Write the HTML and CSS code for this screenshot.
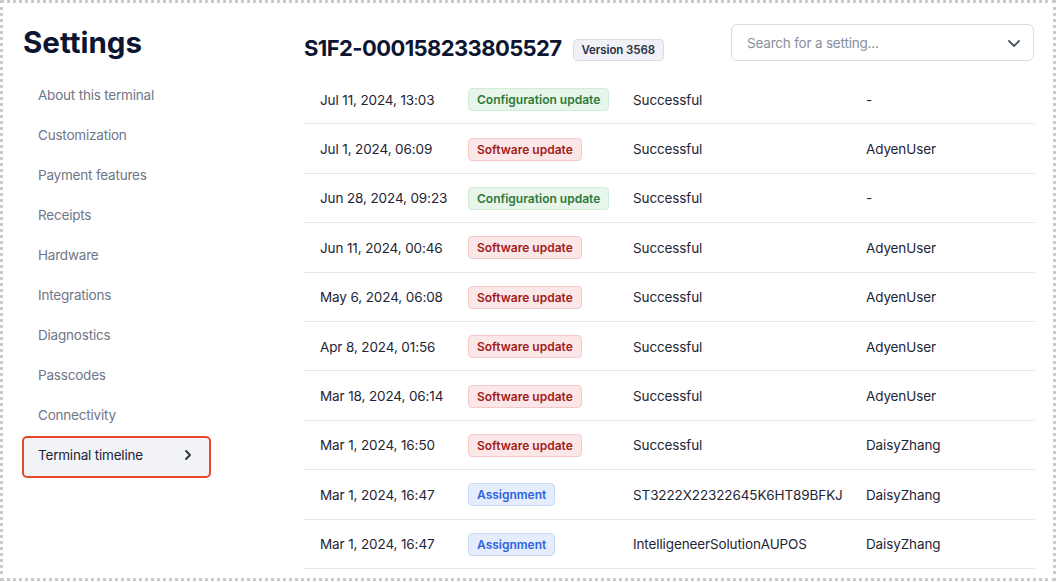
FILE: index.html
```html
<!DOCTYPE html>
<html lang="en">
<head>
<meta charset="utf-8">
<title>Settings</title>
<link rel="stylesheet" href="styles.css">
</head>
<body>
<div class="frame">
  <aside class="sidebar">
    <h1 class="sidebar-title">Settings</h1>
    <nav class="nav">
      <a class="nav-item">About this terminal</a>
      <a class="nav-item">Customization</a>
      <a class="nav-item">Payment features</a>
      <a class="nav-item">Receipts</a>
      <a class="nav-item">Hardware</a>
      <a class="nav-item">Integrations</a>
      <a class="nav-item">Diagnostics</a>
      <a class="nav-item">Passcodes</a>
      <a class="nav-item">Connectivity</a>
      <a class="nav-item nav-item-active">
        <span>Terminal timeline</span>
        <svg class="nav-chevron" width="10" height="12" viewBox="0 0 10 12"><path d="M3 2 L7 6 L3 10" fill="none" stroke="#2a3040" stroke-width="1.8" stroke-linecap="round" stroke-linejoin="round"/></svg>
      </a>
    </nav>
  </aside>
  <main class="main">
    <header class="header">
      <div class="title-group">
        <h2 class="terminal-id">S1F2-000158233805527</h2>
        <span class="version-badge">Version 3568</span>
      </div>
      <div class="search">
        <span class="search-placeholder">Search for a setting...</span>
        <svg class="search-chevron" width="14" height="10" viewBox="0 0 14 10"><path d="M2 3 L7 8 L12 3" fill="none" stroke="#4b5263" stroke-width="1.8" stroke-linecap="round" stroke-linejoin="round"/></svg>
      </div>
    </header>
    <div class="timeline">
      <div class="row"><span class="date">Jul 11, 2024, 13:03</span><span><span class="badge badge-config">Configuration update</span></span><span class="cell">Successful</span><span class="cell">-</span></div>
      <div class="row"><span class="date">Jul 1, 2024, 06:09</span><span><span class="badge badge-software">Software update</span></span><span class="cell">Successful</span><span class="cell">AdyenUser</span></div>
      <div class="row"><span class="date">Jun 28, 2024, 09:23</span><span><span class="badge badge-config">Configuration update</span></span><span class="cell">Successful</span><span class="cell">-</span></div>
      <div class="row"><span class="date">Jun 11, 2024, 00:46</span><span><span class="badge badge-software">Software update</span></span><span class="cell">Successful</span><span class="cell">AdyenUser</span></div>
      <div class="row"><span class="date">May 6, 2024, 06:08</span><span><span class="badge badge-software">Software update</span></span><span class="cell">Successful</span><span class="cell">AdyenUser</span></div>
      <div class="row"><span class="date">Apr 8, 2024, 01:56</span><span><span class="badge badge-software">Software update</span></span><span class="cell">Successful</span><span class="cell">AdyenUser</span></div>
      <div class="row"><span class="date">Mar 18, 2024, 06:14</span><span><span class="badge badge-software">Software update</span></span><span class="cell">Successful</span><span class="cell">AdyenUser</span></div>
      <div class="row"><span class="date">Mar 1, 2024, 16:50</span><span><span class="badge badge-software">Software update</span></span><span class="cell">Successful</span><span class="cell">DaisyZhang</span></div>
      <div class="row"><span class="date">Mar 1, 2024, 16:47</span><span><span class="badge badge-assign">Assignment</span></span><span class="cell">ST3222X22322645K6HT89BFKJ</span><span class="cell">DaisyZhang</span></div>
      <div class="row"><span class="date">Mar 1, 2024, 16:47</span><span><span class="badge badge-assign">Assignment</span></span><span class="cell">IntelligeneerSolutionAUPOS</span><span class="cell">DaisyZhang</span></div>
    </div>
  </main>
</div>
</body>
</html>
```
FILE: styles.css
```css
* { box-sizing: border-box; }
html, body { margin: 0; padding: 0; background: #ffffff; }
body {
  font-family: "Inter", "Liberation Sans", sans-serif;
  color: #1e2535;
}
.frame {
  width: 1056px;
  height: 581px;
  border: 3px dotted #cacaca;
  display: flex;
  padding-top: 21px;
  overflow: hidden;
}
.sidebar {
  margin-left: 19px;
  width: 189px;
  flex: none;
}
.sidebar-title {
  margin: 0 0 14.5px 1px;
  font-size: 29.5px;
  line-height: 36px;
  font-weight: 700;
  color: #0d1631;
}
.nav { display: flex; flex-direction: column; }
.nav-item {
  height: 40px;
  display: flex;
  align-items: center;
  padding-left: 16px;
  font-size: 13.5px;
  letter-spacing: -0.2px;
  color: #6f7687;
}
.nav-item-active {
  height: 42px;
  margin-top: 1px;
  padding: 0 16px 3px 14px;
  justify-content: space-between;
  border: 2px solid #e8462f;
  border-radius: 5px;
  background: #f2f3f7;
  color: #1c2437;
}
.nav-chevron { display: block; }
.main {
  margin-left: 93px;
  width: 731px;
  flex: none;
}
.header {
  height: 37px;
  display: flex;
  justify-content: space-between;
  align-items: flex-end;
}
.title-group {
  display: flex;
  align-items: flex-end;
  gap: 11px;
}
.terminal-id {
  margin: 0 0 -1px 0;
  font-size: 22px;
  line-height: 28px;
  letter-spacing: -0.6px;
  font-weight: 700;
  color: #0d1631;
}
.version-badge {
  height: 22px;
  padding: 0 8px;
  display: inline-flex;
  align-items: center;
  font-size: 11.5px;
  font-weight: 600;
  letter-spacing: -0.1px;
  color: #283042;
  background: #eff1f6;
  border: 1px solid #d9dde5;
  border-radius: 4px;
}
.search {
  width: 303px;
  height: 37px;
  margin-right: 1px;
  border: 1px solid #d7dbe3;
  border-radius: 6px;
  display: flex;
  align-items: center;
  justify-content: space-between;
  padding: 0 12px 0 15px;
}
.search-placeholder { font-size: 13.5px; letter-spacing: -0.2px; color: #878e9d; }
.search-chevron { display: block; }
.timeline { margin-top: 14px; }
.row {
  height: 49.4px;
  display: grid;
  grid-template-columns: 164px 165px 233px 1fr;
  align-items: center;
  padding-top: 1px;
  border-bottom: 1px solid #e3e6eb;
  font-size: 13.5px;
  letter-spacing: -0.12px;
  color: #1e2535;
}
.date { padding-left: 16px; }
.cell { white-space: nowrap; }
.badge {
  display: inline-flex;
  align-items: center;
  height: 23px;
  padding: 0 8px;
  border-radius: 4px;
  font-size: 12px;
  font-weight: 600;
  letter-spacing: 0;
  border: 1px solid transparent;
}
.badge-config { background: #e7f5ea; border-color: #d2ecd8; color: #2c7a3a; }
.badge-software { background: #fbe7e7; border-color: #f3c9c9; color: #a31b1b; }
.badge-assign { background: #e5edfc; border-color: #cbdaf6; color: #2e63df; }
```
